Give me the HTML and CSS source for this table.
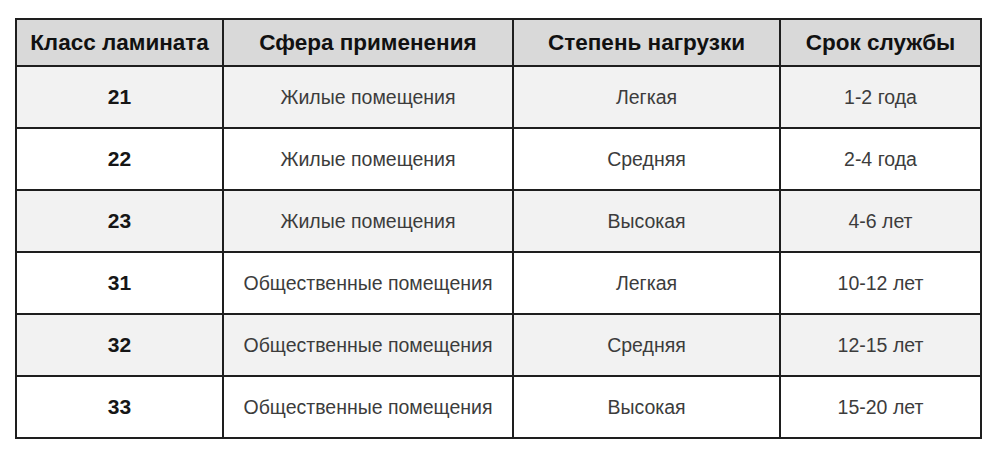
FILE: index.html
```html
<!DOCTYPE html>
<html lang="ru">
<head>
<meta charset="utf-8">
<link rel="stylesheet" href="styles.css">
</head>
<body>
<table class="laminate">
  <colgroup>
    <col class="c1"><col class="c2"><col class="c3"><col class="c4">
  </colgroup>
  <thead>
    <tr><th>Класс ламината</th><th>Сфера применения</th><th>Степень нагрузки</th><th>Срок службы</th></tr>
  </thead>
  <tbody>
    <tr><td class="num">21</td><td>Жилые помещения</td><td>Легкая</td><td>1-2 года</td></tr>
    <tr><td class="num">22</td><td>Жилые помещения</td><td>Средняя</td><td>2-4 года</td></tr>
    <tr><td class="num">23</td><td>Жилые помещения</td><td>Высокая</td><td>4-6 лет</td></tr>
    <tr><td class="num">31</td><td>Общественные помещения</td><td>Легкая</td><td>10-12 лет</td></tr>
    <tr><td class="num">32</td><td>Общественные помещения</td><td>Средняя</td><td>12-15 лет</td></tr>
    <tr><td class="num">33</td><td>Общественные помещения</td><td>Высокая</td><td>15-20 лет</td></tr>
  </tbody>
</table>
</body>
</html>
```
FILE: styles.css
```css
html, body {
  margin: 0;
  padding: 0;
  background: #fff;
}
body {
  padding: 18px 0 0 15px;
  font-family: "Liberation Sans", Arial, sans-serif;
}
.laminate {
  border-collapse: collapse;
  table-layout: fixed;
  width: 965px;
  border: 2px solid #1e1e1e;
}
.c1 { width: 207px; }
.c2 { width: 290px; }
.c3 { width: 267px; }
.c4 { width: 201px; }
.laminate th,
.laminate td {
  border: 2px solid #1e1e1e;
  text-align: center;
  padding: 0;
  white-space: nowrap;
}
.laminate th {
  height: 45px;
  background: #d9d9d9;
  color: #111;
  font-weight: bold;
  font-size: 22.5px;
}
.laminate td {
  height: 60px;
  color: #3c3c3c;
  font-size: 19.5px;
}
.laminate tbody tr:nth-child(odd) td {
  background: #f2f2f2;
}
.laminate td.num {
  font-weight: bold;
  font-size: 21px;
  color: #161616;
}
```
